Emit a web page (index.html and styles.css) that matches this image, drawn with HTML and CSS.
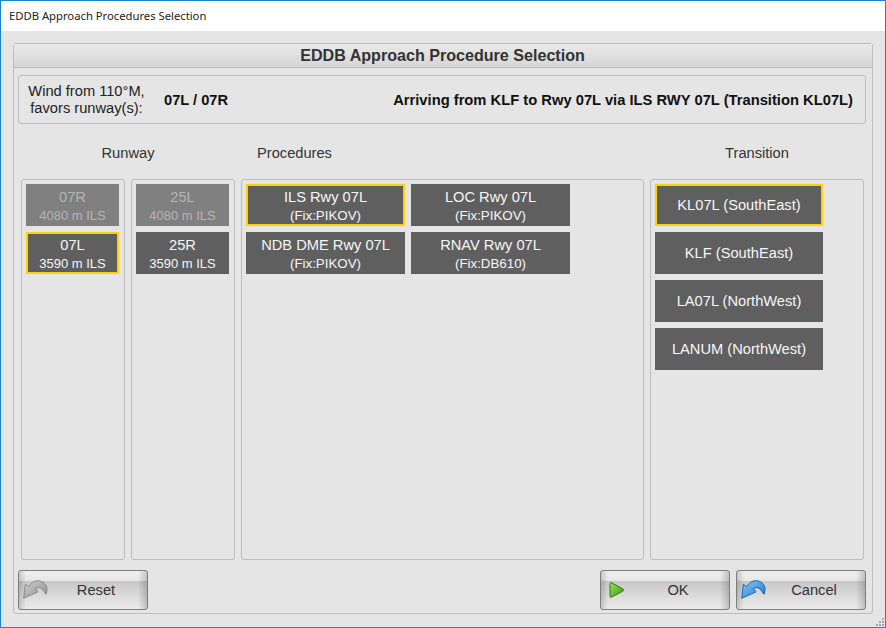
FILE: index.html
```html
<!DOCTYPE html>
<html lang="en">
<head>
<meta charset="utf-8">
<title>EDDB Approach Procedures Selection</title>
<link rel="stylesheet" href="styles.css">
</head>
<body>
<div class="window">
  <div class="titlebar">EDDB Approach Procedures Selection</div>
  <div class="content">
    <div class="panel">
      <div class="panel-header">EDDB Approach Procedure Selection</div>
      <div class="panel-body">
        <div class="info">
          <div class="wind">Wind from 110°M,<br>favors runway(s):</div>
          <div class="favored">07L / 07R</div>
          <div class="route">Arriving from KLF to Rwy 07L via ILS RWY 07L (Transition KL07L)</div>
        </div>
        <div class="columns">
          <section class="column">
            <h2 class="column-title">Runway</h2>
            <div class="split">
              <div class="box stack">
                <div class="tile two rwy off"><span>07R</span><small>4080 m ILS</small></div>
                <div class="tile two rwy sel"><span>07L</span><small>3590 m ILS</small></div>
              </div>
              <div class="box stack">
                <div class="tile two rwy off"><span>25L</span><small>4080 m ILS</small></div>
                <div class="tile two rwy"><span>25R</span><small>3590 m ILS</small></div>
              </div>
            </div>
          </section>
          <section class="column">
            <h2 class="column-title title-left">Procedures</h2>
            <div class="box proc-grid">
              <div class="tile two sel"><span>ILS Rwy 07L</span><small>(Fix:PIKOV)</small></div>
              <div class="tile two"><span>LOC Rwy 07L</span><small>(Fix:PIKOV)</small></div>
              <div class="tile two"><span>NDB DME Rwy 07L</span><small>(Fix:PIKOV)</small></div>
              <div class="tile two"><span>RNAV Rwy 07L</span><small>(Fix:DB610)</small></div>
            </div>
          </section>
          <section class="column">
            <h2 class="column-title">Transition</h2>
            <div class="box stack trans">
              <div class="tile sel"><span>KL07L (SouthEast)</span></div>
              <div class="tile"><span>KLF (SouthEast)</span></div>
              <div class="tile"><span>LA07L (NorthWest)</span></div>
              <div class="tile"><span>LANUM (NorthWest)</span></div>
            </div>
          </section>
        </div>
        <div class="footer">
          <button class="btn" type="button">
            <svg class="ico" width="26" height="20" viewBox="0 0 26 20">
              <defs><linearGradient id="g1" x1="0" y1="0" x2="1" y2="1"><stop offset="0" stop-color="#d2d2d2"/><stop offset="1" stop-color="#8c8c8c"/></linearGradient></defs>
              <path d="M1.7 18.3 L3.3 4.3 L6.7 6.5 C9 3 12 .7 15.5 .7 C20.5 .7 25 4 25 9 C25 11 24.8 12.8 24 14.3 C22.5 12.5 21.5 10.5 20 9 C18 7.2 15.5 7.3 13.3 8.6 L16 11.8 Z" fill="url(#g1)" stroke="#8a8a8a" stroke-width="1" stroke-linejoin="round"/>
            </svg>
            Reset
          </button>
          <div class="footer-right">
            <button class="btn" type="button">
              <svg class="ico ico-ok" width="16" height="18" viewBox="0 0 16 18">
                <defs><linearGradient id="g2" x1="0" y1="0" x2="1" y2="1"><stop offset="0" stop-color="#a6e04e"/><stop offset="1" stop-color="#2f9a1c"/></linearGradient></defs>
                <path d="M2 1.5 C1.2 1.5 1 2 1 3 L1 15 C1 16 1.4 16.6 2.4 16.2 L14 10 C15 9.4 15 8.6 14 8 Z" fill="url(#g2)" stroke="#2c7d1a" stroke-width="1" stroke-linejoin="round"/>
              </svg>
              OK
            </button>
            <button class="btn" type="button">
              <svg class="ico" width="26" height="20" viewBox="0 0 26 20">
                <defs><linearGradient id="g3" x1="0" y1="0" x2="1" y2="1"><stop offset="0" stop-color="#8ccdf7"/><stop offset="1" stop-color="#1a70c6"/></linearGradient></defs>
                <path d="M1.7 18.3 L3.3 4.3 L6.7 6.5 C9 3 12 .7 15.5 .7 C20.5 .7 25 4 25 9 C25 11 24.8 12.8 24 14.3 C22.5 12.5 21.5 10.5 20 9 C18 7.2 15.5 7.3 13.3 8.6 L16 11.8 Z" fill="url(#g3)" stroke="#1a66b5" stroke-width="1" stroke-linejoin="round"/>
              </svg>
              Cancel
            </button>
          </div>
        </div>
      </div>
    </div>
  </div>
  <svg class="grip" width="10" height="10" viewBox="0 0 10 10">
    <g fill="#a9a9a9">
      <rect x="7" y="1" width="2" height="2"/>
      <rect x="4" y="4" width="2" height="2"/><rect x="7" y="4" width="2" height="2"/>
      <rect x="1" y="7" width="2" height="2"/><rect x="4" y="7" width="2" height="2"/><rect x="7" y="7" width="2" height="2"/>
    </g>
  </svg>
</div>
</body>
</html>
```
FILE: styles.css
```css
* { box-sizing: border-box; }
html, body { margin: 0; padding: 0; }
body { font-family: "Liberation Sans", Arial, sans-serif; background: #e5e5e5; }

.window {
  position: relative;
  width: 886px;
  height: 628px;
  border: 1px solid #1883d7;
  background: #e5e5e5;
  display: flex;
  flex-direction: column;
}

.titlebar {
  height: 30px;
  flex: none;
  background: #fff;
  color: #222;
  font-family: "Noto Sans", "Open Sans", sans-serif;
  font-size: 11.25px;
  line-height: 29px;
  padding-left: 8px;
}

.content {
  flex: 1;
  padding: 12px 12px 13px;
  display: flex;
  min-height: 0;
}

.panel {
  flex: 1;
  display: flex;
  flex-direction: column;
  border: 1px solid #bdbdbd;
  border-radius: 3px;
}

.panel-header {
  height: 24px;
  flex: none;
  background: linear-gradient(#e9e9e9, #d6d6d6);
  border-bottom: 1px solid #b9b9b9;
  color: #333;
  font-size: 16.1px;
  font-weight: bold;
  line-height: 23px;
  text-align: center;
  padding-right: 1px;
}

.panel-body {
  flex: 1;
  display: flex;
  flex-direction: column;
  padding: 7px 6px 3px 4px;
  min-height: 0;
}

.info {
  height: 49px;
  flex: none;
  display: flex;
  align-items: center;
  border: 1px solid #bdbdbd;
  border-radius: 3px;
  font-size: 14.67px;
  color: #222;
  padding: 0 12px 0 9px;
}

.wind { width: 117px; text-align: center; line-height: 17px; white-space: nowrap; }
.favored { margin-left: 19px; font-weight: bold; color: #111; }
.route { margin-left: auto; font-weight: bold; font-size: 14.74px; color: #111; }

.columns {
  flex: 1;
  display: grid;
  grid-template-columns: 214px 403px 214px;
  gap: 6px;
  margin: 0 2px 0 3px;
  min-height: 0;
}

.column { display: flex; flex-direction: column; min-height: 0; }

.column-title {
  margin: 0;
  height: 55px;
  flex: none;
  font-size: 14.67px;
  font-weight: normal;
  color: #333;
  line-height: 58px;
  text-align: center;
}
.title-left { text-align: left; padding-left: 16px; }

.split { flex: 1; display: flex; gap: 6px; min-height: 0; }

.box {
  flex: 1;
  border: 1px solid #bdbdbd;
  border-radius: 3px;
  padding: 4px 5px 3px 4px;
}

.stack { display: flex; flex-direction: column; gap: 6px; }
.trans { align-items: flex-start; }
.trans .tile { width: 168px; }

.proc-grid {
  display: grid;
  grid-template-columns: 159px 159px;
  grid-auto-rows: 42px;
  gap: 6px;
  align-content: start;
}

.tile {
  height: 42px;
  flex: none;
  background: #5f5f5f;
  color: #f6f6f6;
  display: flex;
  flex-direction: column;
  align-items: center;
  justify-content: center;
  font-size: 14.67px;
  line-height: 18px;
}
.tile.two { padding-top: 2px; }
.tile small { font-size: 13.33px; line-height: 19px; }
.tile.rwy small { font-size: 13px; }
.tile.off { background: #808080; color: #b4b4b4; }
.tile.sel { border: 2px solid #ffd200; }

.footer {
  flex: none;
  display: flex;
  justify-content: space-between;
  margin-top: 10px;
}
.footer-right { display: flex; gap: 6px; }

.btn {
  position: relative;
  width: 130px;
  height: 40px;
  padding: 0 0 0 26px;
  border: 1px solid #7d7d7d;
  border-radius: 3px;
  color: #333;
  font-family: "Liberation Sans", Arial, sans-serif;
  font-size: 14.67px;
  background:
    linear-gradient(90deg, rgba(0,0,0,.16), rgba(0,0,0,0) 7px, rgba(0,0,0,0) calc(100% - 9px), rgba(0,0,0,.18)),
    linear-gradient(#f0f0f0 0, #e6e6e6 10px, #c6c6c6 10px, #cfcfcf 16px, #ececec 100%);
}

.ico { position: absolute; left: 3px; top: 9px; }
.ico-ok { left: 8px; top: 10px; }

.grip { position: absolute; right: 0; bottom: 0; }
```
